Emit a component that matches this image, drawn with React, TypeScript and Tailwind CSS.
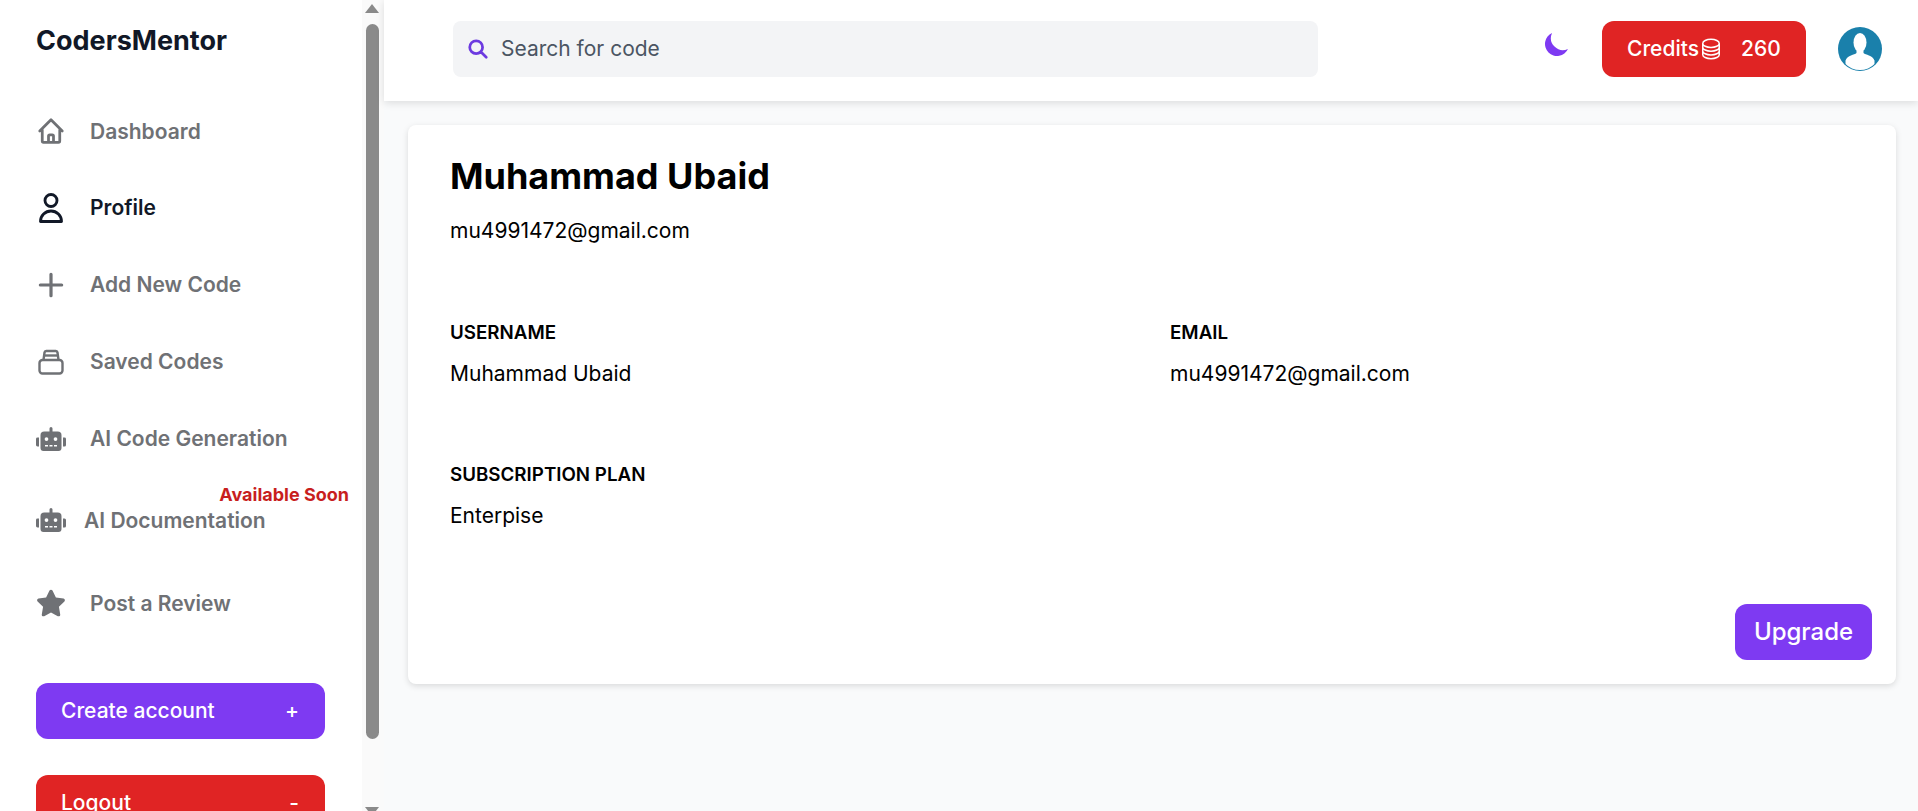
import { FaRobot, FaStar } from "react-icons/fa";
import { HiOutlineHome, HiOutlineUser, HiOutlinePlus, HiMoon, HiOutlineSearch } from "react-icons/hi";
import { HiOutlineCircleStack } from "react-icons/hi2";

function SavedIcon() {
  return (
    <svg viewBox="0 0 26 26" className="w-[26px] h-[26px] shrink-0" fill="none" stroke="currentColor" strokeWidth="2.4" strokeLinejoin="round">
      <rect x="1.5" y="11" width="23" height="13.5" rx="3" />
      <path d="M5.5 11 L6.5 3.5 Q6.7 2 8.2 2 H17.8 Q19.3 2 19.5 3.5 L20.5 11" />
      <path d="M5.8 6.5 H20.2" />
    </svg>
  );
}

function Avatar() {
  return (
    <svg viewBox="0 0 44 44" className="w-11 h-11">
      <clipPath id="avatar-clip">
        <circle cx="22" cy="22" r="21" />
      </clipPath>
      <circle cx="22" cy="22" r="22" fill="#1a80ab" />
      <g clipPath="url(#avatar-clip)" fill="#fff">
        <ellipse cx="22" cy="15.500" rx="6.500" ry="9.500" />
        <path d="M18.500 22h7v4c2 2 9 2 11 7.500v11h-29v-11c2-5.500 9-5.500 11-7.500z" />
      </g>
    </svg>
  );
}

const navItems = [
  { label: "Dashboard", icon: <HiOutlineHome className="w-[30px] h-[30px] shrink-0 stroke-[2.2]" /> },
  { label: "Profile", icon: <HiOutlineUser className="w-[36px] h-[36px] shrink-0 stroke-[1.9]" />, active: true },
  { label: "Add New Code", icon: <HiOutlinePlus className="w-[32px] h-[32px] shrink-0 stroke-[2.4]" /> },
  { label: "Saved Codes", icon: <SavedIcon /> },
  { label: "AI Code Generation", icon: <FaRobot className="w-[30px] h-[30px] shrink-0" /> },
];

export default function App() {
  return (
    <div className="flex h-screen overflow-hidden bg-[#f9fafb] font-['Inter',sans-serif] text-black">
      {/* Sidebar */}
      <aside className="flex w-[384px] shrink-0 overflow-hidden bg-white">
        <div className="w-[362px] shrink-0 overflow-hidden pl-9 pr-[37px]">
          <div className="h-[93px] pt-[25px] text-[27px] leading-[32px] font-bold text-[#111827]">CodersMentor</div>
          <nav className="flex flex-col">
            {navItems.map((item) => (
              <div
                key={item.label}
                className={`flex h-[76.8px] items-center ${item.active ? "text-[#111827]" : "text-[#6f7175]"}`}
              >
                <span className="mr-[24px] flex w-[30px] shrink-0 items-center justify-center">{item.icon}</span>
                <span className="text-[21px] font-semibold">{item.label}</span>
              </div>
            ))}
            <div className="relative flex h-[87px] items-center text-[#6f7175]">
              <span className="absolute -right-[24px] top-[4px] text-[18px] font-bold text-[#c81e1e]">Available Soon</span>
              <span className="mr-[18px] flex w-[30px] shrink-0"><FaRobot className="w-[30px] h-[30px]" /></span>
              <span className="text-[21px] font-semibold">AI Documentation</span>
            </div>
            <div className="flex h-[79px] items-center text-[#6f7175]">
              <span className="mr-[24px] flex w-[30px] shrink-0"><FaStar className="w-[30px] h-[30px]" /></span>
              <span className="text-[21px] font-semibold">Post a Review</span>
            </div>
          </nav>
          <div className="mt-[40px] flex flex-col gap-9 w-[289px]">
            <button className="flex h-[56px] items-center justify-between rounded-xl bg-[#7e3af2] pl-[25px] pr-[26px] text-[21px] font-medium text-white">
              Create account <span>+</span>
            </button>
            <button className="flex h-[56px] items-center justify-between rounded-xl bg-[#e02424] pl-[25px] pr-[26px] text-[21px] font-medium text-white">
              Logout <span>-</span>
            </button>
          </div>
        </div>
        {/* Scrollbar */}
        <div className="flex w-[22px] shrink-0 flex-col items-center bg-[#fafafa] pr-[2px]">
          <div className="mt-[4px] h-0 w-0 shrink-0 border-x-[7px] border-b-[9px] border-x-transparent border-b-[#8a8a8a]" />
          <div className="mt-[11px] h-[715px] w-[13px] shrink-0 rounded-full bg-[#8a8a8a]" />
          <div className="mt-[68px] h-0 w-0 shrink-0 border-x-[7px] border-t-[9px] border-x-transparent border-t-[#8a8a8a]" />
        </div>
      </aside>

      {/* Main */}
      <div className="flex min-w-0 flex-1 flex-col">
        <header className="flex h-[101px] shrink-0 items-center bg-white pb-[4px] pl-[69px] pr-9 shadow-[0_2px_8px_rgba(0,0,0,0.12)]">
          <div className="flex h-14 w-[865px] items-center rounded-lg bg-[#f3f4f6] pl-[14px] text-[21px] text-[#4b5563]">
            <HiOutlineSearch className="mr-[12px] h-[22px] w-[22px] stroke-[3] text-[#6c3ae0]" />
            Search for code
          </div>
          <div className="ml-auto flex items-center">
            <HiMoon className="mr-[30px] -mt-[10px] h-[30px] w-[30px] text-[#7e3af2]" />
            <div className="flex h-14 w-[204px] items-center rounded-xl bg-[#e02424] pl-[25px] text-[21px] font-medium text-white">
              Credits
              <HiOutlineCircleStack className="h-[24px] w-[24px]" />
              <span className="ml-[18px]">260</span>
            </div>
            <div className="ml-8"><Avatar /></div>
          </div>
        </header>

        <main className="px-6 pt-6">
          <section className="flex h-[559px] w-[1488px] flex-col rounded-lg bg-white pl-[42px] pr-6 pt-[26px] shadow-[0_2px_6px_rgba(0,0,0,0.13)]">
            <h1 className="text-[36px] leading-[50px] font-bold">Muhammad Ubaid</h1>
            <p className="mt-[16px] text-[21px] leading-[28px]">mu4991472@gmail.com</p>
            <div className="mt-[76px] grid grid-cols-[720px_1fr]">
              <div>
                <h2 className="text-[18.75px] leading-[24px] font-semibold">USERNAME</h2>
                <p className="mt-[15px] text-[21px] leading-[28px]">Muhammad Ubaid</p>
              </div>
              <div>
                <h2 className="text-[18.75px] leading-[24px] font-semibold">EMAIL</h2>
                <p className="mt-[15px] text-[21px] leading-[28px]">mu4991472@gmail.com</p>
              </div>
              <div className="mt-[75px]">
                <h2 className="text-[18.75px] leading-[24px] font-semibold">SUBSCRIPTION PLAN</h2>
                <p className="mt-[15px] text-[21px] leading-[28px]">Enterpise</p>
              </div>
            </div>
            <div className="mt-auto mb-6 flex justify-end">
              <button className="flex h-14 w-[137px] items-center justify-center rounded-xl bg-[#7e3af2] text-[24px] font-medium text-white">Upgrade</button>
            </div>
          </section>
        </main>
      </div>
    </div>
  );
}
